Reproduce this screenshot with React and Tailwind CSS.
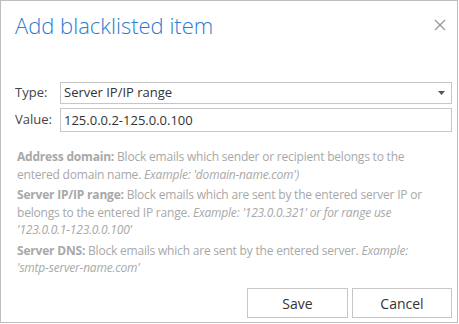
import { useState } from "react";

const FONT = { fontFamily: '"Open Sans", "Noto Sans", sans-serif' };

const HELP = [
  {
    label: "Address domain:",
    lines: [
      "Block emails which sender or recipient belongs to the",
      "entered domain name. ",
    ],
    example: "Example: 'domain-name.com')",
  },
  {
    label: "Server IP/IP range:",
    lines: [
      "Block emails which are sent by the entered server IP or",
      "belongs to the entered IP range. ",
    ],
    example: "Example: '123.0.0.321' or for range use",
    example2: "'123.0.0.1-123.0.0.100'",
  },
  {
    label: "Server DNS:",
    lines: ["Block emails which are sent by the entered server. "],
    example: "Example:",
    example2: "'smtp-server-name.com'",
  },
];

export default function App() {
  const [type] = useState("Server IP/IP range");
  const [value, setValue] = useState("125.0.0.2-125.0.0.100");

  return (
    <div
      className="w-[458px] h-[323px] border border-[#bdbdbd] bg-white flex flex-col text-[#333]"
      style={FONT}
    >
      <div className="flex items-start justify-between pl-[14px] pr-[11px] pt-[10px]">
        <h1 className="text-[22px] leading-[28px] text-[#2b7bd0] font-light">
          Add blacklisted item
        </h1>
        <button className="mt-[8px] text-[#9a9a9a]" title="Close">
          <svg className="w-[12px] h-[12px]" viewBox="0 0 12 12" fill="none" stroke="currentColor" strokeWidth={1.4}>
            <path d="M1 1l10 10M11 1L1 11" />
          </svg>
        </button>
      </div>

      <div className="flex flex-col gap-[4px] pl-[14px] pr-[5px] mt-[43px] text-[13px]">
        <div className="flex items-center">
          <span className="w-[45px] text-[#444]">Type:</span>
          <div className="flex-1 h-[22px] border border-[#c6c6c6] flex items-center justify-between pl-[3px] pr-[6px]">
            <span>{type}</span>
            <svg className="w-[7px] h-[4px] text-[#555]" viewBox="0 0 7 4" fill="currentColor">
              <path d="M0 0h7L3.5 4z" />
            </svg>
          </div>
        </div>
        <div className="flex items-center">
          <span className="w-[45px] text-[#444]">Value:</span>
          <input
            value={value}
            onChange={(e) => setValue(e.target.value)}
            className="flex-1 h-[24px] border border-[#c6c6c6] pl-[3px] outline-none text-[#333]"
          />
        </div>
      </div>

      <div className="pl-[16px] pr-[5px] mt-[16px] flex flex-col gap-[3px] text-[12px] tracking-[-0.2px] leading-[17.5px] text-[#a8a8a8] whitespace-nowrap">
        {HELP.map((h) => (
          <p key={h.label}>
            <span className="font-bold">{h.label}</span> {h.lines[0]}
            {h.lines[1] !== undefined && (
              <>
                <br />
                {h.lines[1]}
              </>
            )}
            <i>{h.example}</i>
            {h.example2 && (
              <>
                <br />
                <i>{h.example2}</i>
              </>
            )}
          </p>
        ))}
      </div>

      <div className="mt-auto mb-[4px] flex justify-end gap-[4px] pr-[5px]">
        <button className="w-[101px] h-[30px] border border-[#c6c6c6] bg-white text-[14px] text-[#333]">
          Save
        </button>
        <button className="w-[100px] h-[30px] border border-[#c6c6c6] bg-white text-[14px] text-[#333]">
          Cancel
        </button>
      </div>
    </div>
  );
}
